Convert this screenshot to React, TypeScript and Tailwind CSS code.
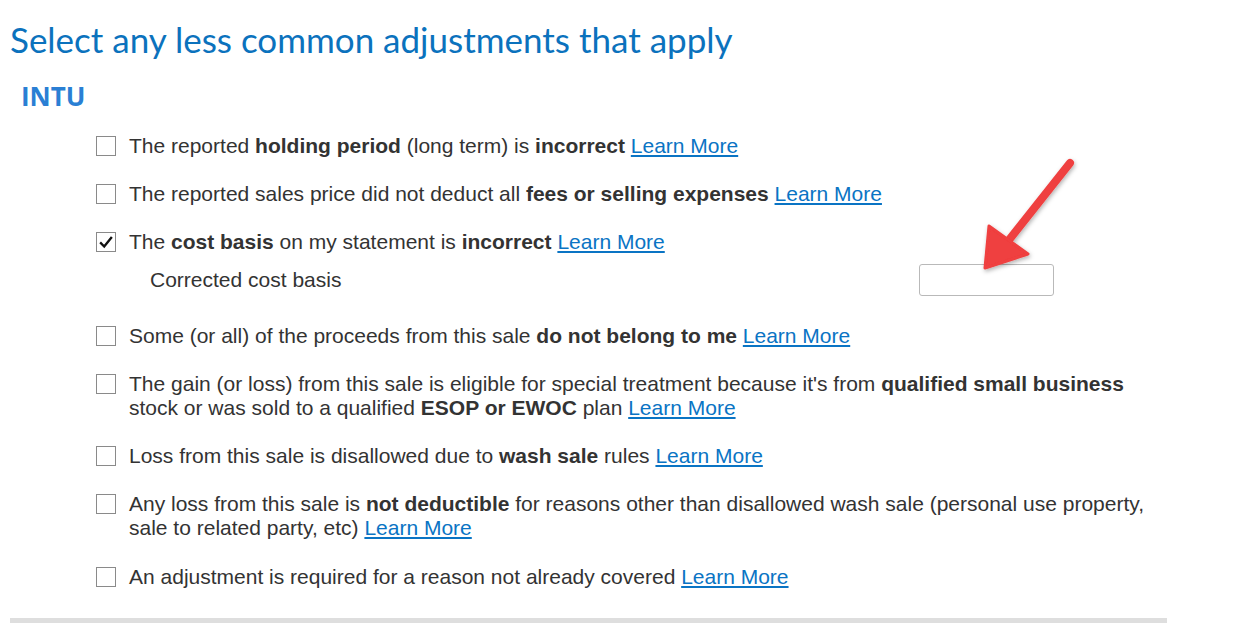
import React, { useState } from 'react';

const LearnMore = () => (
  <a href="#" className="text-[#0a74c4] underline underline-offset-2">
    Learn More
  </a>
);

const Check = ({ checked, onChange }: { checked: boolean; onChange: () => void }) => (
  <button
    type="button"
    onClick={onChange}
    className="mt-[2px] flex h-[20px] w-[20px] shrink-0 items-center justify-center border border-[#8a8a8a] bg-white"
  >
    {checked && (
      <svg viewBox="0 0 20 20" className="h-[18px] w-[18px]">
        <path d="M3.5 10.5 L8 15 L16.5 4.5" fill="none" stroke="#111" strokeWidth="2.6" />
      </svg>
    )}
  </button>
);

const Option = ({
  checked,
  onToggle,
  children,
}: {
  checked: boolean;
  onToggle: () => void;
  children: React.ReactNode;
}) => (
  <div className="flex items-start gap-[13px]">
    <Check checked={checked} onChange={onToggle} />
    <p className="leading-[24px]">{children}</p>
  </div>
);

export default function App() {
  const [checks, setChecks] = useState<boolean[]>([false, false, true, false, false, false, false, false]);
  const toggle = (i: number) => setChecks((c) => c.map((v, j) => (j === i ? !v : v)));

  return (
    <div className="relative h-[624px] w-[1243px] overflow-hidden bg-white">
      <h1
        className="pl-[10px] pt-[17px] text-[35px] leading-[44px] text-[#0b72bd]"
        style={{ fontFamily: 'Lato, "Open Sans", sans-serif' }}
      >
        Select any less common adjustments that apply
      </h1>
      <h2
        className="pl-[21px] pt-[18px] text-[26px] font-bold leading-[34px] text-[#2a7fd4]"
        style={{ fontFamily: '"Open Sans", Lato, sans-serif' }}
      >
        INTU
      </h2>

      <div
        className="flex w-[1160px] flex-col gap-[24px] pl-[96px] pt-[21px] text-[21px] text-[#333333]"
        style={{ fontFamily: '"Liberation Sans", Arial, sans-serif' }}
      >
        <Option checked={checks[0]} onToggle={() => toggle(0)}>
          The reported <b>holding period</b> (long term) is <b>incorrect</b> <LearnMore />
        </Option>
        <Option checked={checks[1]} onToggle={() => toggle(1)}>
          The reported sales price did not deduct all <b>fees or selling expenses</b> <LearnMore />
        </Option>
        <div className="mb-[4px] flex flex-col">
          <Option checked={checks[2]} onToggle={() => toggle(2)}>
            The <b>cost basis</b> on my statement is <b>incorrect</b> <LearnMore />
          </Option>
          <div className="mt-[10px] flex items-center pl-[54px]">
            <span className="w-[769px]">Corrected cost basis</span>
            <input
              type="text"
              className="h-[32px] w-[135px] rounded-[3px] border border-[#b9b9b9] bg-white px-2 outline-none"
            />
          </div>
        </div>
        <Option checked={checks[3]} onToggle={() => toggle(3)}>
          Some (or all) of the proceeds from this sale <b>do not belong to me</b> <LearnMore />
        </Option>
        <Option checked={checks[4]} onToggle={() => toggle(4)}>
          The gain (or loss) from this sale is eligible for special treatment because it's from{' '}
          <b>qualified small business</b> stock or was sold to a qualified <b>ESOP or EWOC</b> plan <LearnMore />
        </Option>
        <Option checked={checks[5]} onToggle={() => toggle(5)}>
          Loss from this sale is disallowed due to <b>wash sale</b> rules <LearnMore />
        </Option>
        <Option checked={checks[6]} onToggle={() => toggle(6)}>
          Any loss from this sale is <b>not deductible</b> for reasons other than disallowed wash sale (personal use
          property, sale to related party, etc) <LearnMore />
        </Option>
        <div className="mt-[1px]">
          <Option checked={checks[7]} onToggle={() => toggle(7)}>
            An adjustment is required for a reason not already covered <LearnMore />
          </Option>
        </div>
      </div>

      <div className="ml-[10px] mt-[29px] h-[5px] w-[1157px] bg-[#dedede]" />

      {/* annotation arrow */}
      <svg className="pointer-events-none absolute left-[960px] top-[150px]" width="130" height="140" viewBox="0 0 130 140">
        <defs>
          <filter id="sh" x="-20%" y="-20%" width="140%" height="140%">
            <feDropShadow dx="1" dy="2" stdDeviation="2" floodColor="#000" floodOpacity="0.3" />
          </filter>
        </defs>
        <g filter="url(#sh)">
          <line x1="110" y1="13" x2="45" y2="95" stroke="#ef3f3f" strokeWidth="8" strokeLinecap="round" />
          <path d="M25 118 L29 76 L68 104 Z" fill="#ef3f3f" stroke="#ef3f3f" strokeWidth="3" strokeLinejoin="round" />
        </g>
      </svg>
    </div>
  );
}
